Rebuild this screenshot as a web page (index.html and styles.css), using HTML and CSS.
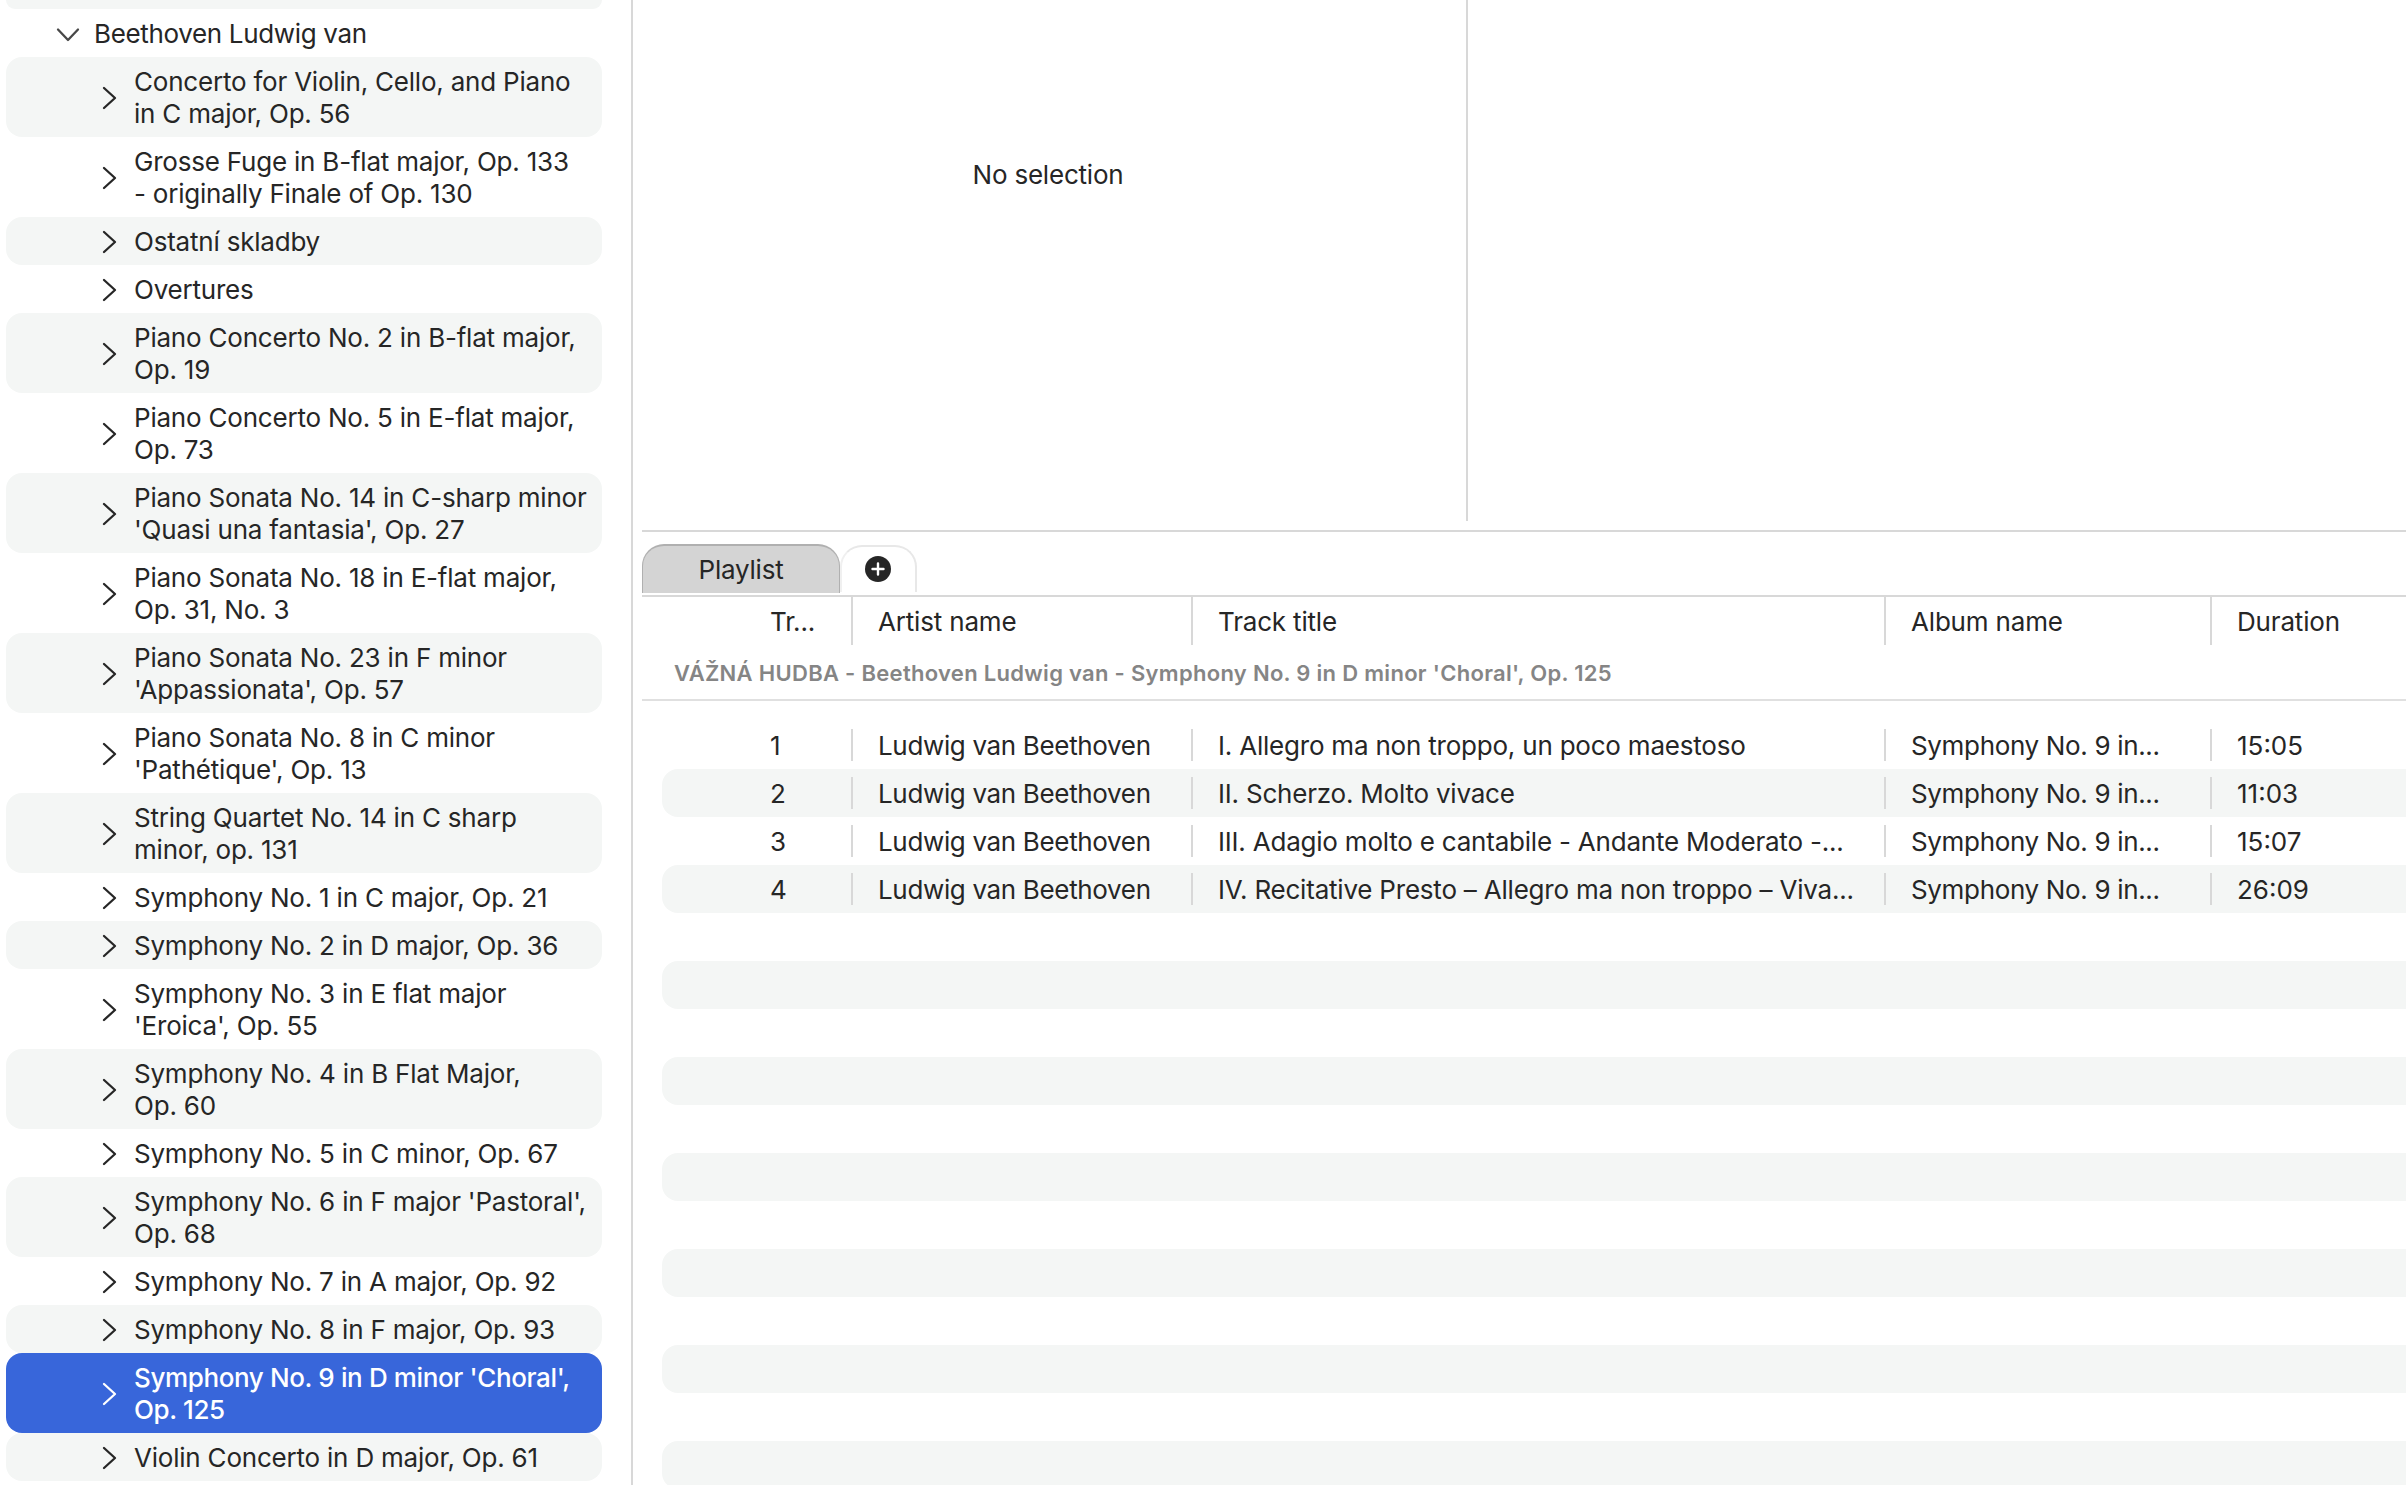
FILE: index.html
```
<!DOCTYPE html>
<html lang="en">
<head>
    <meta charset="UTF-8">
    <meta name="viewport" content="width=device-width, initial-scale=1.0">
    <title>Music Library</title>
    <link rel="stylesheet" href="styles.css">
</head>
<body>
    <div class="app">
        <aside class="sidebar">
            <ul class="tree" id="tree">
                <li class="tree-row cut"></li>
                <li class="tree-row parent">
                    <svg class="chevron-down" width="24" height="16" viewBox="0 0 24 16"><path d="M2 3.5 L12 14 L22 3.5"/></svg>
                    <span>Beethoven Ludwig van</span>
                </li>
            </ul>
        </aside>

        <main class="content">
            <div class="panes">
                <section class="pane browser">No selection</section>
                <section class="pane detail"></section>
            </div>

            <div class="tabs">
                <div class="tab active">Playlist</div>
                <div class="tab add">
                    <svg width="26" height="26" viewBox="0 0 26 26"><circle cx="13" cy="13" r="13"/><path d="M13 7.5 V18.5 M7.5 13 H18.5"/></svg>
                </div>
            </div>

            <div class="grid header">
                <div class="cell">Tr...</div>
                <div class="cell">Artist name</div>
                <div class="cell">Track title</div>
                <div class="cell">Album name</div>
                <div class="cell">Duration</div>
            </div>
            <h2 class="group-title">VÁŽNÁ HUDBA - Beethoven Ludwig van - Symphony No. 9 in D minor 'Choral', Op. 125</h2>
            <div class="tracks" id="tracks"></div>
        </main>
    </div>

    <script src="script.js"></script>
</body>
</html>
```

FILE: styles.css
```
:root {
    --text-color: #262626;
    --muted-color: #858585;
    --line-color: #d8d8d8;
    --stripe-color: #f4f6f5;
    --accent-color: #3866da;
}

* {
    box-sizing: border-box;
}

body {
    margin: 0;
    font-family: Inter, "Liberation Sans", sans-serif;
    font-size: 26px;
    line-height: 32px;
    letter-spacing: -0.21px;
    color: var(--text-color);
    background: #fff;
    overflow: hidden;
}

.app {
    display: flex;
    height: 100vh;
    overflow: hidden;
}

/* Sidebar */
.sidebar {
    flex: 0 0 633px;
    border-right: 2px solid var(--line-color);
}

.tree {
    list-style: none;
    margin: 0;
    padding: 0 29px 0 6px;
}

.tree-row {
    display: flex;
    align-items: center;
    gap: 17px;
    padding: 9px 0 7px 96px;
    border-radius: 16px;
    white-space: nowrap;
}

.tree-row.cut {
    height: 9px;
    padding: 0;
    border-radius: 0 0 15px 15px;
}

.tree-row.parent {
    gap: 14px;
    padding-left: 50px;
    letter-spacing: -0.34px;
}

.tree-row:nth-child(odd) {
    background: var(--stripe-color);
}

.tree-row.selected {
    background: var(--accent-color);
    color: #fff;
    font-weight: 500;
    letter-spacing: -0.38px;
}

.tree-row svg {
    flex: none;
    fill: none;
    stroke: currentColor;
    stroke-width: 2.3;
    stroke-linecap: round;
    stroke-linejoin: round;
}

.tree-row .chevron-down {
    stroke: #484848;
}

/* Content */
.content {
    flex: 1;
    min-width: 0;
    padding-left: 9px;
}

.panes {
    display: flex;
    height: 532px;
    padding-bottom: 9px;
    border-bottom: 2px solid var(--line-color);
}

.browser {
    flex: 0 0 826px;
    padding-top: 159px;
    padding-right: 12px;
    border-right: 2px solid var(--line-color);
    text-align: center;
}

.tabs {
    display: flex;
    align-items: flex-start;
    height: 65px;
    padding-top: 12px;
    border-bottom: 2px solid var(--line-color);
}

.tab {
    display: flex;
    align-items: center;
    justify-content: center;
    height: 49px;
    border: 2px solid #e8e8e8;
    border-bottom: none;
    border-radius: 22px 22px 0 0;
}

.tab.active {
    width: 198px;
    background: #d4d4d4;
    border: 1px solid #b0b0b0;
    border-top-width: 2px;
    border-bottom: none;
}

.tab.add {
    width: 77px;
    height: 47px;
    margin-top: 1px;
    padding: 0 2px 1px 0;
    border-left-color: #f0f0f0;
}

.tab.add circle {
    fill: var(--text-color);
}

.tab.add path {
    stroke: #fff;
    stroke-width: 2.4;
    stroke-linecap: round;
}

/* Track table */
.grid {
    display: grid;
    grid-template-columns: 191px 340px 693px 326px 1fr;
    height: 48px;
    padding: 8px 0;
    margin-left: 20px;
    border-radius: 16px 0 0 16px;
}

.cell {
    padding-top: 1px;
    padding-left: 25px;
    border-right: 2px solid var(--line-color);
    line-height: 32px;
    white-space: nowrap;
    overflow: hidden;
}

.cell:first-child {
    padding-left: 108px;
}

.cell:last-child {
    border-right: none;
}

.tracks .cell:nth-child(2),
.tracks .cell:nth-child(4) {
    letter-spacing: -0.34px;
}

.tracks .cell:last-child {
    letter-spacing: 0;
}

.grid.header {
    padding: 0;
    letter-spacing: -0.18px;
}

.header .cell {
    padding-top: 9px;
}

.group-title {
    height: 56px;
    margin: 0;
    padding: 12px 0 0 32px;
    border-bottom: 2px solid #e0e0e0;
    font-size: 22px;
    font-weight: 600;
    letter-spacing: 0.3px;
    color: var(--muted-color);
}

.tracks {
    padding-top: 20px;
}

.tracks .grid:nth-child(even) {
    background: var(--stripe-color);
}
```

FILE: script.js
```
const works = [
    ['Concerto for Violin, Cello, and Piano', 'in C major, Op. 56'],
    ['Grosse Fuge in B-flat major, Op. 133', '- originally Finale of Op. 130'],
    ['Ostatní skladby'],
    ['Overtures'],
    ['Piano Concerto No. 2 in B-flat major,', 'Op. 19'],
    ['Piano Concerto No. 5 in E-flat major,', 'Op. 73'],
    ['Piano Sonata No. 14 in C-sharp minor', "'Quasi una fantasia', Op. 27"],
    ['Piano Sonata No. 18 in E-flat major,', 'Op. 31, No. 3'],
    ['Piano Sonata No. 23 in F minor', "'Appassionata', Op. 57"],
    ['Piano Sonata No. 8 in C minor', "'Pathétique', Op. 13"],
    ['String Quartet No. 14 in C sharp', 'minor, op. 131'],
    ['Symphony No. 1 in C major, Op. 21'],
    ['Symphony No. 2 in D major, Op. 36'],
    ['Symphony No. 3 in E flat major', "'Eroica', Op. 55"],
    ['Symphony No. 4 in B Flat Major,', 'Op. 60'],
    ['Symphony No. 5 in C minor, Op. 67'],
    ["Symphony No. 6 in F major 'Pastoral',", 'Op. 68'],
    ['Symphony No. 7 in A major, Op. 92'],
    ['Symphony No. 8 in F major, Op. 93'],
    ["Symphony No. 9 in D minor 'Choral',", 'Op. 125'],
    ['Violin Concerto in D major, Op. 61']
];
const selectedWork = 19;

const tracks = [
    ['1', 'I. Allegro ma non troppo, un poco maestoso', '15:05'],
    ['2', 'II. Scherzo. Molto vivace', '11:03'],
    ['3', 'III. Adagio molto e cantabile - Andante Moderato -...', '15:07'],
    ['4', 'IV. Recitative Presto – Allegro ma non troppo – Viva...', '26:09']
];
const rowCount = 16;

const tree = document.getElementById('tree');
works.forEach(function(lines, i) {
    const row = document.createElement('li');
    row.className = 'tree-row' + (i === selectedWork ? ' selected' : '');
    row.innerHTML = '<svg width="15" height="24" viewBox="0 0 15 24"><path d="M2 2 L13 12 L2 22"/></svg>' +
        '<span>' + lines.join('<br>') + '</span>';
    tree.appendChild(row);
});

const list = document.getElementById('tracks');
for (let i = 0; i < rowCount; i++) {
    const row = document.createElement('div');
    row.className = 'grid';
    // Rows past the last track only keep the striping
    if (tracks[i]) {
        const cells = [tracks[i][0], 'Ludwig van Beethoven', tracks[i][1], 'Symphony No. 9 in...', tracks[i][2]];
        row.innerHTML = cells.map(text => '<div class="cell">' + text + '</div>').join('');
    }
    list.appendChild(row);
}
```
